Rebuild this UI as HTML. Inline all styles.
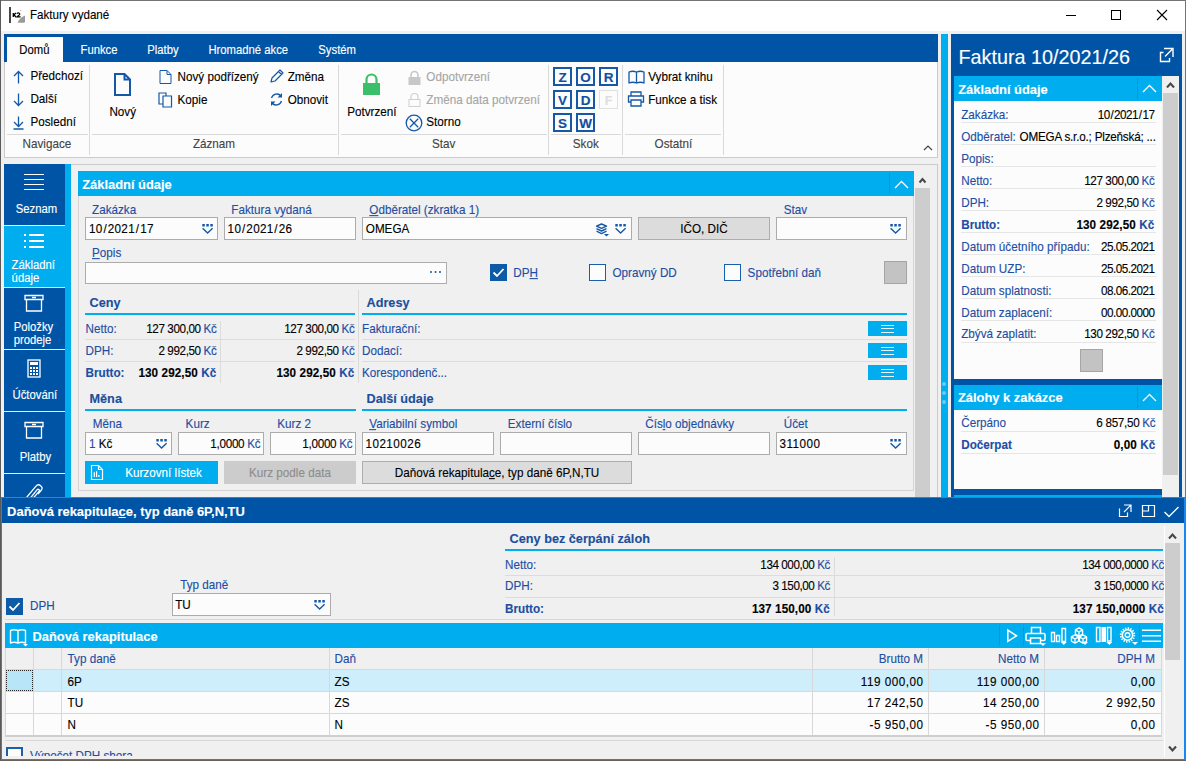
<!DOCTYPE html><html><head><meta charset="utf-8"><style>html,body{margin:0;padding:0;}body{width:1186px;height:761px;position:relative;overflow:hidden;background:#f0f0f0;font-family:"Liberation Sans",sans-serif;}.a{position:absolute;}.t{position:absolute;white-space:nowrap;line-height:16px;-webkit-text-stroke:0.12px currentColor;transform:scaleY(1.08);transform-origin:0 12px;}u{text-decoration:underline;text-underline-offset:1px;text-decoration-thickness:1px;}</style></head><body><div class="a" style="left:0px;top:0px;width:1186px;height:761px;background:#f0f0f0;"></div><div class="a" style="left:1px;top:1px;width:1184px;height:30px;background:#ffffff;"></div><div class="a" style="left:0px;top:0px;width:1186px;height:1px;background:#747474;"></div><div class="a" style="left:0px;top:0px;width:1px;height:761px;background:#5a5a5a;"></div><div class="a" style="left:1185px;top:0px;width:1px;height:761px;background:#747474;"></div><svg class="a" style="left:8px;top:6px;" width="18" height="18" viewBox="0 0 18 18"><rect x="1" y="1" width="2" height="16" fill="#474747"/><path d="M9.5 16.5 Q12 11.5 17 9.5 V15.8 Q17 16.8 16 16.8 H10.5 Z" fill="#9a9a9a"/><path d="M5.3 7 V11 M5.6 9 L8 7 M5.9 8.8 L8 11" stroke="#000" stroke-width="1.3" fill="none"/><path d="M8.8 7.6 Q10 6.6 11.3 7.2 Q12.3 8 11.2 9 L9 10.8 H12.6" stroke="#000" stroke-width="1.2" fill="none"/><path d="M12.5 4 L13 5" stroke="#aaa" stroke-width="1"/></svg><div class="t" style="top:7.48px;font-size:11.6px;color:#000;left:30px;">Faktury vydané</div><div class="a" style="left:1066px;top:15px;width:10px;height:1px;background:#000;"></div><div class="a" style="left:1111px;top:10px;width:10px;height:10px;box-shadow:inset 0 0 0 1px #000;"></div><svg class="a" style="left:1156px;top:9px;" width="12" height="12" viewBox="0 0 12 12"><path d="M1 1 L11 11 M11 1 L1 11" stroke="#000" stroke-width="1.1"/></svg><div class="a" style="left:4px;top:34px;width:934px;height:28px;background:#0054a6;"></div><div class="a" style="left:7px;top:37px;width:56px;height:25px;background:#fcfcfc;"></div><div class="t" style="top:42.08px;font-size:11.3px;color:#000;left:19.3px;">Domů</div><div class="t" style="top:42.08px;font-size:11.3px;color:#fff;left:80.5px;">Funkce</div><div class="t" style="top:42.08px;font-size:11.3px;color:#fff;left:147.3px;">Platby</div><div class="t" style="top:42.08px;font-size:11.3px;color:#fff;left:208.4px;">Hromadné akce</div><div class="t" style="top:42.08px;font-size:11.3px;color:#fff;left:318.3px;">Systém</div><div class="a" style="left:4px;top:62px;width:934px;height:96px;background:#cbcbcb;"></div><div class="a" style="left:5px;top:62px;width:932px;height:95px;background:#fcfcfc;"></div><div class="a" style="left:89px;top:65px;width:1px;height:90px;background:#d9d9d9;"></div><div class="a" style="left:338px;top:65px;width:1px;height:90px;background:#d9d9d9;"></div><div class="a" style="left:548px;top:65px;width:1px;height:90px;background:#d9d9d9;"></div><div class="a" style="left:622px;top:65px;width:1px;height:90px;background:#d9d9d9;"></div><div class="a" style="left:723px;top:65px;width:1px;height:90px;background:#d9d9d9;"></div><div class="a" style="left:7px;top:134px;width:81px;height:1px;background:#d9d9d9;"></div><div class="a" style="left:92px;top:134px;width:245px;height:1px;background:#d9d9d9;"></div><div class="a" style="left:341px;top:134px;width:206px;height:1px;background:#d9d9d9;"></div><div class="a" style="left:551px;top:134px;width:70px;height:1px;background:#d9d9d9;"></div><div class="a" style="left:625px;top:134px;width:96px;height:1px;background:#d9d9d9;"></div><div class="t" style="top:136.45px;font-size:11.7px;color:#444;left:22.5px;">Navigace</div><div class="t" style="top:136.45px;font-size:11.7px;color:#444;left:192.9px;">Záznam</div><div class="t" style="top:136.45px;font-size:11.7px;color:#444;left:432px;">Stav</div><div class="t" style="top:136.45px;font-size:11.7px;color:#444;left:572.8px;">Skok</div><div class="t" style="top:136.45px;font-size:11.7px;color:#444;left:654.6px;">Ostatní</div><div class="t" style="top:68.45px;font-size:11.7px;color:#000;left:30.4px;">Předchozí</div><div class="t" style="top:91.35px;font-size:11.7px;color:#000;left:30.4px;">Další</div><div class="t" style="top:114.25px;font-size:11.7px;color:#000;left:30.4px;">Poslední</div><svg class="a" style="left:13px;top:70px;" width="11" height="14" viewBox="0 0 11 14"><path d="M5.5 1.5 V13.5 M1 6 L5.5 1.5 L10 6" stroke="#1558a8" stroke-width="1.3" fill="none"/></svg><svg class="a" style="left:13px;top:93px;" width="11" height="14" viewBox="0 0 11 14"><path d="M5.5 0.5 V12.5 M1 8 L5.5 12.5 L10 8" stroke="#1558a8" stroke-width="1.3" fill="none"/></svg><svg class="a" style="left:13px;top:116px;" width="11" height="14" viewBox="0 0 11 14"><path d="M5.5 0.5 V10.5 M1 6 L5.5 10.5 L10 6 M0.5 13 H10.5" stroke="#1558a8" stroke-width="1.3" fill="none"/></svg><svg class="a" style="left:113px;top:73px;" width="20" height="24" viewBox="0 0 20 24"><path d="M2 1 H11.5 L17 6.5 V22 H2 Z M11.5 1 V6.5 H17" stroke="#1558a8" stroke-width="2" fill="none" stroke-linejoin="miter"/></svg><div class="t" style="top:103.95px;font-size:11.7px;color:#000;left:109.4px;">Nový</div><svg class="a" style="left:159px;top:70px;" width="13" height="15" viewBox="0 0 13 15"><path d="M1 0.5 H8 L12 4.5 V13.5 H1 Z M8 0.5 V4.5 H12" stroke="#1558a8" stroke-width="1" fill="none"/></svg><div class="t" style="top:68.95px;font-size:11.7px;color:#000;left:177.5px;">Nový podřízený</div><svg class="a" style="left:158px;top:92px;" width="15" height="16" viewBox="0 0 15 16"><path d="M1 1 H8 V12 H1 Z" stroke="#1558a8" stroke-width="1.2" fill="none"/><path d="M5 4 H13.5 V15 H5 Z" stroke="#1558a8" stroke-width="1.2" fill="#fcfcfc"/></svg><div class="t" style="top:91.75px;font-size:11.7px;color:#000;left:177.5px;">Kopie</div><svg class="a" style="left:269px;top:69px;" width="15" height="15" viewBox="0 0 15 15"><path d="M2 13 L3 9 L11 1 L14 4 L6 12 Z M9.5 2.5 L12.5 5.5" stroke="#1558a8" stroke-width="1.2" fill="none" stroke-linejoin="round"/></svg><div class="t" style="top:68.95px;font-size:11.7px;color:#000;left:287.7px;">Změna</div><svg class="a" style="left:269px;top:92px;" width="15" height="15" viewBox="0 0 15 15"><path d="M2.5 6 A5.5 5.5 0 0 1 12 4 M12.5 9 A5.5 5.5 0 0 1 3 11" stroke="#1558a8" stroke-width="1.3" fill="none"/><path d="M13 1 V5.5 H8.5 Z M2 14 V9.5 H6.5 Z" fill="#1558a8"/></svg><div class="t" style="top:91.75px;font-size:11.7px;color:#000;left:287.7px;">Obnovit</div><svg class="a" style="left:362px;top:73px;" width="19" height="23" viewBox="0 0 19 23"><path d="M4.5 10 V6.5 A5 5 0 0 1 14.5 6.5 V10" stroke="#3cbf6a" stroke-width="2.2" fill="none"/><rect x="1" y="10" width="17" height="12" fill="#3cbf6a"/></svg><div class="t" style="top:103.95px;font-size:11.7px;color:#000;left:347.2px;">Potvrzení</div><svg class="a" style="left:408px;top:70px;" width="13" height="15" viewBox="0 0 13 15"><path d="M3 7 V5 A3.5 3.5 0 0 1 10 5 V7" stroke="#c8c8c8" stroke-width="1.6" fill="none"/><rect x="0.5" y="7" width="12" height="8" fill="#c8c8c8"/></svg><div class="t" style="top:68.95px;font-size:11.7px;color:#a6a6a6;left:426.3px;">Odpotvrzení</div><svg class="a" style="left:408px;top:92px;" width="13" height="15" viewBox="0 0 13 15"><path d="M3 7 V5 A3.5 3.5 0 0 1 10 5 V7" stroke="#d0d0d0" stroke-width="1.2" fill="none"/><rect x="1" y="7.5" width="11" height="7" stroke="#d0d0d0" stroke-width="1" fill="none"/></svg><div class="t" style="top:91.75px;font-size:11.7px;color:#a6a6a6;left:426.3px;">Změna data potvrzení</div><svg class="a" style="left:405px;top:114px;" width="18" height="18" viewBox="0 0 18 18"><circle cx="9" cy="9" r="7.8" stroke="#1558a8" stroke-width="1.3" fill="none"/><path d="M4.8 4.8 L13.2 13.2 M13.2 4.8 L4.8 13.2" stroke="#1558a8" stroke-width="1.3"/></svg><div class="t" style="top:114.35px;font-size:11.7px;color:#000;left:426.3px;">Storno</div><div class="a" style="left:553px;top:67px;width:15px;height:15px;border:2px solid #1558a8;"></div><div class="t" style="top:69.62px;font-size:13.5px;color:#0f4f9e;font-weight:bold;left:553.0px;width:19px;text-align:center;transform:none;">Z</div><div class="a" style="left:576px;top:67px;width:15px;height:15px;border:2px solid #1558a8;"></div><div class="t" style="top:69.62px;font-size:13.5px;color:#0f4f9e;font-weight:bold;left:576.0px;width:19px;text-align:center;transform:none;">O</div><div class="a" style="left:599px;top:67px;width:15px;height:15px;border:2px solid #1558a8;"></div><div class="t" style="top:69.62px;font-size:13.5px;color:#0f4f9e;font-weight:bold;left:599.0px;width:19px;text-align:center;transform:none;">R</div><div class="a" style="left:553px;top:90px;width:15px;height:15px;border:2px solid #1558a8;"></div><div class="t" style="top:92.62px;font-size:13.5px;color:#0f4f9e;font-weight:bold;left:553.0px;width:19px;text-align:center;transform:none;">V</div><div class="a" style="left:576px;top:90px;width:15px;height:15px;border:2px solid #1558a8;"></div><div class="t" style="top:92.62px;font-size:13.5px;color:#0f4f9e;font-weight:bold;left:576.0px;width:19px;text-align:center;transform:none;">D</div><div class="a" style="left:599px;top:90px;width:19px;height:19px;box-shadow:inset 0 0 0 1px #e0e0e0;"></div><div class="t" style="top:92.67px;font-size:12.5px;color:#dedede;font-weight:bold;left:599.0px;width:19px;text-align:center;transform:none;">F</div><div class="a" style="left:553px;top:113px;width:15px;height:15px;border:2px solid #1558a8;"></div><div class="t" style="top:115.62px;font-size:13.5px;color:#0f4f9e;font-weight:bold;left:553.0px;width:19px;text-align:center;transform:none;">S</div><div class="a" style="left:576px;top:113px;width:15px;height:15px;border:2px solid #1558a8;"></div><div class="t" style="top:115.62px;font-size:13.5px;color:#0f4f9e;font-weight:bold;left:576.0px;width:19px;text-align:center;transform:none;">W</div><svg class="a" style="left:628px;top:70px;" width="17" height="14" viewBox="0 0 17 14"><path d="M1 2 Q4.5 0.5 8.5 2 V13 Q4.5 11.5 1 13 Z M8.5 2 Q12.5 0.5 16 2 V13 Q12.5 11.5 8.5 13 Z" stroke="#1558a8" stroke-width="1.3" fill="none" stroke-linejoin="round"/></svg><div class="t" style="top:68.95px;font-size:11.7px;color:#000;left:648.2px;">Vybrat knihu</div><svg class="a" style="left:627px;top:91px;" width="18" height="16" viewBox="0 0 18 16"><path d="M4 5 V1 H14 V5 M4 11 H1.5 V5 H16.5 V11 H14 M4 9 H14 V15 H4 Z" stroke="#1558a8" stroke-width="1.3" fill="none"/></svg><div class="t" style="top:91.75px;font-size:11.7px;color:#000;left:648.2px;">Funkce a tisk</div><svg class="a" style="left:922px;top:144px;" width="12" height="8" viewBox="0 0 12 8"><path d="M2 6 L6 2 L10 6" stroke="#444" stroke-width="1.2" fill="none"/></svg><div class="a" style="left:71px;top:164px;width:867px;height:1px;background:#cbcbcb;"></div><div class="a" style="left:937px;top:164px;width:1px;height:333px;background:#cbcbcb;"></div><div class="a" style="left:4px;top:164px;width:61px;height:333px;background:#0054a6;"></div><div class="a" style="left:65px;top:164px;width:6px;height:333px;background:#00adef;"></div><div class="a" style="left:4px;top:226px;width:67px;height:61px;background:#00adef;"></div><div class="a" style="left:4px;top:225px;width:61px;height:1px;background:#e8eef6;"></div><div class="a" style="left:4px;top:287px;width:61px;height:1px;background:#e8eef6;"></div><div class="a" style="left:4px;top:349px;width:61px;height:1px;background:#e8eef6;"></div><div class="a" style="left:4px;top:411px;width:61px;height:1px;background:#e8eef6;"></div><div class="a" style="left:4px;top:473px;width:61px;height:1px;background:#e8eef6;"></div><div class="a" style="left:24px;top:174px;width:20px;height:1.3px;background:#fff"></div><div class="a" style="left:24px;top:179px;width:20px;height:1.3px;background:#fff"></div><div class="a" style="left:24px;top:184px;width:20px;height:1.3px;background:#fff"></div><div class="a" style="left:24px;top:189px;width:20px;height:1.3px;background:#fff"></div><div class="t" style="top:200.68px;font-size:11.3px;color:#ffffff;left:15.7px;">Seznam</div><div class="a" style="left:24px;top:234px;width:2px;height:1.6px;background:#fff"></div><div class="a" style="left:29px;top:234px;width:15px;height:1.6px;background:#fff"></div><div class="a" style="left:24px;top:240px;width:2px;height:1.6px;background:#fff"></div><div class="a" style="left:29px;top:240px;width:15px;height:1.6px;background:#fff"></div><div class="a" style="left:24px;top:246px;width:2px;height:1.6px;background:#fff"></div><div class="a" style="left:29px;top:246px;width:15px;height:1.6px;background:#fff"></div><div class="t" style="top:257.08px;font-size:11.3px;color:#ffffff;left:11.6px;">Základní</div><div class="t" style="top:270.28px;font-size:11.3px;color:#ffffff;left:11.6px;">údaje</div><svg class="a" style="left:24px;top:294px;" width="20" height="18" viewBox="0 0 20 18"><path d="M1 1.5 H19 V5.5 H1 Z M2.5 5.5 V17 H17.5 V5.5" stroke="#fff" stroke-width="1.3" fill="none"/><path d="M8 3.5 H12" stroke="#fff" stroke-width="1.5"/></svg><div class="t" style="top:319.08px;font-size:11.3px;color:#ffffff;left:13.7px;">Položky</div><div class="t" style="top:332.28px;font-size:11.3px;color:#ffffff;left:13.7px;">prodeje</div><svg class="a" style="left:27px;top:359px;" width="14" height="19" viewBox="0 0 14 19"><rect x="1" y="1" width="12" height="17" stroke="#fff" stroke-width="1.3" fill="none"/><rect x="3" y="3" width="8" height="3" fill="#fff"/><rect x="3" y="8" width="2" height="2" fill="#fff"/><rect x="3" y="11" width="2" height="2" fill="#fff"/><rect x="3" y="14" width="2" height="2" fill="#fff"/><rect x="6" y="8" width="2" height="2" fill="#fff"/><rect x="6" y="11" width="2" height="2" fill="#fff"/><rect x="6" y="14" width="2" height="2" fill="#fff"/><rect x="9" y="8" width="2" height="2" fill="#fff"/><rect x="9" y="11" width="2" height="2" fill="#fff"/><rect x="9" y="14" width="2" height="2" fill="#fff"/></svg><div class="t" style="top:386.88px;font-size:11.3px;color:#ffffff;left:12.5px;">Účtování</div><svg class="a" style="left:24px;top:421px;" width="20" height="18" viewBox="0 0 20 18"><path d="M1 1.5 H19 V5.5 H1 Z M2.5 5.5 V17 H17.5 V5.5" stroke="#fff" stroke-width="1.3" fill="none"/><path d="M8 3.5 H12" stroke="#fff" stroke-width="1.5"/></svg><div class="t" style="top:448.78px;font-size:11.3px;color:#ffffff;left:19.7px;">Platby</div><svg class="a" style="left:20px;top:478px;" width="26" height="19" viewBox="0 0 26 19"><path d="M6.5 19.5 L16 8.2 A3.3 3.3 0 0 1 21.2 12.3 L18 16 M10.8 19.5 L17.2 11.6 A1.3 1.3 0 0 1 19.2 13.2 L13.8 19.5" stroke="#fff" stroke-width="1.3" fill="none"/></svg><div class="a" style="left:78px;top:171px;width:836px;height:320px;background:#d4d4d4;"></div><div class="a" style="left:79px;top:196px;width:834px;height:294px;background:#f0f0f0;"></div><div class="a" style="left:78px;top:171px;width:836px;height:25px;background:#00adef;"></div><div class="t" style="top:176.63px;font-size:12.9px;color:#ffffff;font-weight:bold;left:82.2px;transform:none;">Základní údaje</div><div class="a" style="left:889px;top:173px;width:1px;height:21px;background:#0a97cf;"></div><svg class="a" style="left:893px;top:178px;" width="17" height="12" viewBox="0 0 17 12"><path d="M2 10 L8.5 3.5 L15 10" stroke="#fff" stroke-width="1.3" fill="none"/></svg><div class="a" style="left:915px;top:171px;width:15px;height:326px;background:#f0f0f0;"></div><div class="a" style="left:915px;top:188px;width:15px;height:309px;background:#cdcdcd;"></div><svg class="a" style="left:917px;top:175px;" width="11" height="9" viewBox="0 0 11 9"><path d="M2.5 7.5 L5.5 4 L8.5 7.5" stroke="#474747" stroke-width="2" fill="none"/></svg><div class="t" style="top:201.65px;font-size:11.7px;color:#1d4ea3;left:92px;">Zakázka</div><div class="a" style="left:85px;top:217px;width:133px;height:23px;background:#acacac;"></div><div class="a" style="left:86px;top:218px;width:131px;height:21px;background:#fcfcfc;"></div><div class="t" style="top:221.25px;font-size:11.7px;color:#000;letter-spacing:0.3px;left:89px;">10<span style="margin:0 0.8px">/</span>2021<span style="margin:0 0.8px">/</span>17</div><svg class="a" style="left:201px;top:224px;" width="13" height="10" viewBox="0 0 13 10"><rect x="1.3" y="0" width="2.5" height="2.5" fill="#1558a8"/><rect x="5.3" y="0" width="2.5" height="2.5" fill="#1558a8"/><rect x="9.3" y="0" width="2.5" height="2.5" fill="#1558a8"/><path d="M1.6 4.2 L6.6 9 L11.6 4.2" stroke="#1558a8" stroke-width="1.4" fill="none"/></svg><div class="t" style="top:201.65px;font-size:11.7px;color:#1d4ea3;left:231.3px;">Faktura vydaná</div><div class="a" style="left:224px;top:217px;width:132px;height:23px;background:#acacac;"></div><div class="a" style="left:225px;top:218px;width:130px;height:21px;background:#fcfcfc;"></div><div class="t" style="top:221.25px;font-size:11.7px;color:#000;letter-spacing:0.3px;left:227.6px;">10<span style="margin:0 0.8px">/</span>2021<span style="margin:0 0.8px">/</span>26</div><div class="t" style="top:201.65px;font-size:11.7px;color:#1d4ea3;left:369.3px;"><u>O</u>dběratel (zkratka 1)</div><div class="a" style="left:362px;top:217px;width:270px;height:23px;background:#acacac;"></div><div class="a" style="left:363px;top:218px;width:268px;height:21px;background:#fcfcfc;"></div><div class="t" style="top:221.25px;font-size:11.7px;color:#000;left:365.8px;">OMEGA</div><svg class="a" style="left:614px;top:224px;" width="13" height="10" viewBox="0 0 13 10"><rect x="1.3" y="0" width="2.5" height="2.5" fill="#1558a8"/><rect x="5.3" y="0" width="2.5" height="2.5" fill="#1558a8"/><rect x="9.3" y="0" width="2.5" height="2.5" fill="#1558a8"/><path d="M1.6 4.2 L6.6 9 L11.6 4.2" stroke="#1558a8" stroke-width="1.4" fill="none"/></svg><svg class="a" style="left:595px;top:223px;" width="15" height="15" viewBox="0 0 15 15"><path d="M1.5 3.2 L6.5 1 L11.5 3.2 L6.5 5.4 Z M1.5 5.6 L6.5 8 L11.5 5.6 M1.5 8.2 L6.5 10.6 L11.5 8.2" stroke="#1558a8" stroke-width="1.4" fill="none" stroke-linejoin="round"/><path d="M9 11 H14 L11.5 13.5 Z" fill="#1558a8"/></svg><div class="a" style="left:638px;top:217px;width:132px;height:23px;background:#adadad;"></div><div class="a" style="left:639px;top:218px;width:130px;height:21px;background:#dcdcdc;"></div><div class="t" style="top:221.25px;font-size:11.7px;color:#000;left:639.0px;width:130px;text-align:center;">IČO, DIČ</div><div class="t" style="top:201.65px;font-size:11.7px;color:#1d4ea3;left:783.7px;">Stav</div><div class="a" style="left:776px;top:217px;width:131px;height:23px;background:#acacac;"></div><div class="a" style="left:777px;top:218px;width:129px;height:21px;background:#fcfcfc;"></div><svg class="a" style="left:889px;top:224px;" width="13" height="10" viewBox="0 0 13 10"><rect x="1.3" y="0" width="2.5" height="2.5" fill="#1558a8"/><rect x="5.3" y="0" width="2.5" height="2.5" fill="#1558a8"/><rect x="9.3" y="0" width="2.5" height="2.5" fill="#1558a8"/><path d="M1.6 4.2 L6.6 9 L11.6 4.2" stroke="#1558a8" stroke-width="1.4" fill="none"/></svg><div class="t" style="top:245.15px;font-size:11.7px;color:#1d4ea3;left:92px;"><u>P</u>opis</div><div class="a" style="left:85px;top:262px;width:362px;height:22px;background:#acacac;"></div><div class="a" style="left:86px;top:263px;width:360px;height:20px;background:#fcfcfc;"></div><svg class="a" style="left:429px;top:270px;" width="14" height="4" viewBox="0 0 14 4"><circle cx="2" cy="2" r="1" fill="#1558a8"/><circle cx="6.5" cy="2" r="1" fill="#1558a8"/><circle cx="11" cy="2" r="1" fill="#1558a8"/></svg><div class="a" style="left:490px;top:264px;width:17px;height:17px;background:#0d5aa7;"></div><svg class="a" style="left:490px;top:264px;" width="17" height="17" viewBox="0 0 17 17"><path d="M3.5 8.5 L7 12 L13.5 5" stroke="#fff" stroke-width="1.8" fill="none"/></svg><div class="t" style="top:264.95px;font-size:11.7px;color:#1d4ea3;left:513.3px;">DP<u>H</u></div><div class="a" style="left:589px;top:264px;width:17px;height:17px;background:#1a5fab;"></div><div class="a" style="left:590px;top:265px;width:15px;height:15px;background:#fcfcfc;"></div><div class="t" style="top:264.95px;font-size:11.7px;color:#1d4ea3;left:612.5px;">Opravný DD</div><div class="a" style="left:724px;top:264px;width:17px;height:17px;background:#1a5fab;"></div><div class="a" style="left:725px;top:265px;width:15px;height:15px;background:#fcfcfc;"></div><div class="t" style="top:264.95px;font-size:11.7px;color:#1d4ea3;left:747.6px;">Spotřební daň</div><div class="a" style="left:884px;top:261px;width:23px;height:23px;background:#a5a5a5;"></div><div class="a" style="left:885px;top:262px;width:21px;height:21px;background:#c3c3c3;"></div><div class="t" style="top:295.10px;font-size:12.7px;color:#1c4e9c;font-weight:bold;left:89.5px;transform:none;">Ceny</div><div class="a" style="left:85px;top:313px;width:270px;height:2px;background:#00adef;"></div><div class="t" style="top:295.10px;font-size:12.7px;color:#1c4e9c;font-weight:bold;left:366.5px;transform:none;">Adresy</div><div class="a" style="left:362px;top:313px;width:545px;height:2px;background:#00adef;"></div><div class="a" style="left:358px;top:290px;width:1px;height:93px;background:#dadada;"></div><div class="t" style="top:320.65px;font-size:11.7px;color:#1d4ea3;left:85.5px;">Netto:</div><div class="t" style="top:320.65px;font-size:11.7px;color:#000;letter-spacing:-0.4px;left:86.4px;width:130px;text-align:right;">127 300,00 <span style="color:#1d4ea3">Kč</span></div><div class="t" style="top:320.65px;font-size:11.7px;color:#000;letter-spacing:-0.4px;left:224.39999999999998px;width:130px;text-align:right;">127 300,00 <span style="color:#1d4ea3">Kč</span></div><div class="t" style="top:342.65px;font-size:11.7px;color:#1d4ea3;left:85.5px;">DPH:</div><div class="t" style="top:342.65px;font-size:11.7px;color:#000;letter-spacing:-0.4px;left:86.4px;width:130px;text-align:right;">2 992,50 <span style="color:#1d4ea3">Kč</span></div><div class="t" style="top:342.65px;font-size:11.7px;color:#000;letter-spacing:-0.4px;left:224.39999999999998px;width:130px;text-align:right;">2 992,50 <span style="color:#1d4ea3">Kč</span></div><div class="t" style="top:364.65px;font-size:11.7px;color:#1d4ea3;font-weight:bold;left:85.5px;">Brutto:</div><div class="t" style="top:364.65px;font-size:11.7px;color:#000;font-weight:bold;letter-spacing:0.1px;left:86.4px;width:130px;text-align:right;">130 292,50 <span style="color:#1d4ea3">Kč</span></div><div class="t" style="top:364.65px;font-size:11.7px;color:#000;font-weight:bold;letter-spacing:0.1px;left:224.39999999999998px;width:130px;text-align:right;">130 292,50 <span style="color:#1d4ea3">Kč</span></div><div class="a" style="left:85px;top:339px;width:270px;height:1px;background:#dcdcdc;"></div><div class="a" style="left:362px;top:339px;width:545px;height:1px;background:#dcdcdc;"></div><div class="a" style="left:85px;top:361px;width:270px;height:1px;background:#dcdcdc;"></div><div class="a" style="left:362px;top:361px;width:545px;height:1px;background:#dcdcdc;"></div><div class="a" style="left:220px;top:321px;width:1px;height:62px;background:#dcdcdc;"></div><div class="t" style="top:320.65px;font-size:11.7px;color:#1d4ea3;left:362px;">Fakturační:</div><div class="t" style="top:342.65px;font-size:11.7px;color:#1d4ea3;left:362px;">Dodací:</div><div class="t" style="top:364.65px;font-size:11.7px;color:#1d4ea3;left:362px;">Korespondenč...</div><div class="a" style="left:868px;top:321px;width:39px;height:15px;background:#00adef;"></div><div class="a" style="left:881px;top:324.5px;width:13px;height:1.3px;background:#e6f7fd"></div><div class="a" style="left:881px;top:328.0px;width:13px;height:1.3px;background:#e6f7fd"></div><div class="a" style="left:881px;top:331.5px;width:13px;height:1.3px;background:#e6f7fd"></div><div class="a" style="left:868px;top:343px;width:39px;height:15px;background:#00adef;"></div><div class="a" style="left:881px;top:346.5px;width:13px;height:1.3px;background:#e6f7fd"></div><div class="a" style="left:881px;top:350.0px;width:13px;height:1.3px;background:#e6f7fd"></div><div class="a" style="left:881px;top:353.5px;width:13px;height:1.3px;background:#e6f7fd"></div><div class="a" style="left:868px;top:365px;width:39px;height:15px;background:#00adef;"></div><div class="a" style="left:881px;top:368.5px;width:13px;height:1.3px;background:#e6f7fd"></div><div class="a" style="left:881px;top:372.0px;width:13px;height:1.3px;background:#e6f7fd"></div><div class="a" style="left:881px;top:375.5px;width:13px;height:1.3px;background:#e6f7fd"></div><div class="t" style="top:390.60px;font-size:12.7px;color:#1c4e9c;font-weight:bold;left:89.5px;transform:none;">Měna</div><div class="a" style="left:85px;top:408.5px;width:271px;height:2.0px;background:#00adef;"></div><div class="t" style="top:390.60px;font-size:12.7px;color:#1c4e9c;font-weight:bold;left:366.5px;transform:none;">Další údaje</div><div class="a" style="left:362px;top:408.5px;width:545px;height:2.0px;background:#00adef;"></div><div class="t" style="top:416.35px;font-size:11.7px;color:#1d4ea3;left:92.7px;">Měna</div><div class="a" style="left:85px;top:432px;width:87px;height:23px;background:#acacac;"></div><div class="a" style="left:86px;top:433px;width:85px;height:21px;background:#fcfcfc;"></div><div class="t" style="top:435.95px;font-size:11.7px;color:#000;left:89px;"><span style="color:#1d4ea3">1</span> Kč</div><svg class="a" style="left:155px;top:439px;" width="13" height="10" viewBox="0 0 13 10"><rect x="1.3" y="0" width="2.5" height="2.5" fill="#1558a8"/><rect x="5.3" y="0" width="2.5" height="2.5" fill="#1558a8"/><rect x="9.3" y="0" width="2.5" height="2.5" fill="#1558a8"/><path d="M1.6 4.2 L6.6 9 L11.6 4.2" stroke="#1558a8" stroke-width="1.4" fill="none"/></svg><div class="t" style="top:416.35px;font-size:11.7px;color:#1d4ea3;left:185.6px;">Kurz</div><div class="a" style="left:178px;top:432px;width:86px;height:23px;background:#acacac;"></div><div class="a" style="left:179px;top:433px;width:84px;height:21px;background:#fcfcfc;"></div><div class="t" style="top:435.95px;font-size:11.7px;color:#000;letter-spacing:-0.3px;left:180.3px;width:80px;text-align:right;">1,0000 <span style="color:#1d4ea3">Kč</span></div><div class="t" style="top:416.35px;font-size:11.7px;color:#1d4ea3;left:277.3px;">Kurz 2</div><div class="a" style="left:270px;top:432px;width:86px;height:23px;background:#acacac;"></div><div class="a" style="left:271px;top:433px;width:84px;height:21px;background:#fcfcfc;"></div><div class="t" style="top:435.95px;font-size:11.7px;color:#000;letter-spacing:-0.3px;left:272.3px;width:80px;text-align:right;">1,0000 <span style="color:#1d4ea3">Kč</span></div><div class="t" style="top:416.35px;font-size:11.7px;color:#1d4ea3;left:369.2px;"><u>V</u>ariabilní symbol</div><div class="a" style="left:362px;top:432px;width:132px;height:23px;background:#acacac;"></div><div class="a" style="left:363px;top:433px;width:130px;height:21px;background:#fcfcfc;"></div><div class="t" style="top:435.95px;font-size:11.7px;color:#000;letter-spacing:0.45px;left:365.5px;">10210026</div><div class="t" style="top:416.35px;font-size:11.7px;color:#1d4ea3;left:507.8px;">Externí číslo</div><div class="a" style="left:500px;top:432px;width:132px;height:23px;background:#acacac;"></div><div class="a" style="left:501px;top:433px;width:130px;height:21px;background:#fcfcfc;"></div><div class="t" style="top:416.35px;font-size:11.7px;color:#1d4ea3;left:645.2px;">Čís<u>l</u>o objednávky</div><div class="a" style="left:638px;top:432px;width:132px;height:23px;background:#acacac;"></div><div class="a" style="left:639px;top:433px;width:130px;height:21px;background:#fcfcfc;"></div><div class="t" style="top:416.35px;font-size:11.7px;color:#1d4ea3;left:783.7px;">Účet</div><div class="a" style="left:776px;top:432px;width:131px;height:23px;background:#acacac;"></div><div class="a" style="left:777px;top:433px;width:129px;height:21px;background:#fcfcfc;"></div><div class="t" style="top:435.95px;font-size:11.7px;color:#000;letter-spacing:0.45px;left:779.5px;">311000</div><svg class="a" style="left:889px;top:439px;" width="13" height="10" viewBox="0 0 13 10"><rect x="1.3" y="0" width="2.5" height="2.5" fill="#1558a8"/><rect x="5.3" y="0" width="2.5" height="2.5" fill="#1558a8"/><rect x="9.3" y="0" width="2.5" height="2.5" fill="#1558a8"/><path d="M1.6 4.2 L6.6 9 L11.6 4.2" stroke="#1558a8" stroke-width="1.4" fill="none"/></svg><div class="a" style="left:85px;top:461px;width:133px;height:23px;background:#00adef;"></div><svg class="a" style="left:89px;top:463px;" width="16" height="19" viewBox="0 0 16 19"><path d="M2.5 2.5 H9.5 L13.5 6.5 V16.5 H2.5 Z M9.5 2.5 V6.5 H13.5" stroke="#fff" stroke-width="1.2" fill="none"/><path d="M5.3 14 V9.3 M7.6 14 V8.2 M9.9 14 V12" stroke="#fff" stroke-width="1.2"/></svg><div class="t" style="top:464.55px;font-size:11.7px;color:#ffffff;left:103.5px;width:120px;text-align:center;">Kurzovní lístek</div><div class="a" style="left:224px;top:461px;width:132px;height:23px;background:#cccccc;"></div><div class="t" style="top:464.55px;font-size:11.7px;color:#8c8c8c;left:225.0px;width:130px;text-align:center;">Kurz podle data</div><div class="a" style="left:362px;top:461px;width:270px;height:23px;background:#adadad;"></div><div class="a" style="left:363px;top:462px;width:268px;height:21px;background:#dcdcdc;"></div><div class="t" style="top:464.55px;font-size:11.7px;color:#000;left:363.0px;width:268px;text-align:center;">Daňová rekapitula<u>c</u>e, typ daně 6P,N,TU</div><div class="a" style="left:941px;top:34px;width:7px;height:463px;background:#00adef;"></div><div class="a" style="left:941.5px;top:382px;width:4px;height:4px;border-radius:50%;background:#6ccbf3"></div><div class="a" style="left:941.5px;top:391px;width:4px;height:4px;border-radius:50%;background:#6ccbf3"></div><div class="a" style="left:941.5px;top:400px;width:4px;height:4px;border-radius:50%;background:#6ccbf3"></div><div class="a" style="left:951px;top:34px;width:231px;height:463px;background:#0054a6;"></div><div class="t" style="top:49.44px;font-size:19.8px;color:#ffffff;left:958.5px;transform:none;">Faktura 10/2021/26</div><svg class="a" style="left:1159px;top:47px;" width="16" height="16" viewBox="0 0 16 16"><path d="M4.5 5.5 H1.5 V14.5 H10.5 V11 M5 1.5 H14 V10 M6 9.5 L13 2.5" stroke="#fff" stroke-width="1.4" fill="none"/></svg><div class="a" style="left:954px;top:76px;width:225px;height:303px;background:#fcfcfc;"></div><div class="a" style="left:954px;top:76px;width:208px;height:25px;background:#00adef;"></div><div class="t" style="top:81.93px;font-size:12.9px;color:#ffffff;font-weight:bold;left:958.2px;transform:none;">Základní údaje</div><div class="a" style="left:1137px;top:78px;width:1px;height:21px;background:#0a97cf;"></div><svg class="a" style="left:1141px;top:83px;" width="17" height="11" viewBox="0 0 17 11"><path d="M2 9 L8.5 2.5 L15 9" stroke="#fff" stroke-width="1.3" fill="none"/></svg><div class="a" style="left:1162px;top:76px;width:17px;height:303px;background:#f0f0f0;"></div><div class="a" style="left:1163px;top:93px;width:15px;height:286px;background:#cdcdcd;"></div><svg class="a" style="left:1165px;top:79px;" width="11" height="9" viewBox="0 0 11 9"><path d="M2 8.5 L5.5 4.5 L9 8.5" stroke="#474747" stroke-width="2.1" fill="none"/></svg><div class="t" style="top:106.55px;font-size:11.7px;color:#1d4ea3;left:961.2px;">Zakázka:</div><div class="t" style="top:106.55px;font-size:11.7px;color:#000;letter-spacing:-0.5px;left:1004.4000000000001px;width:150px;text-align:right;">10<span style="margin:0 0.8px">/</span>2021<span style="margin:0 0.8px">/</span>17</div><div class="a" style="left:961px;top:122px;width:195px;height:1px;background:#e6e6e6;"></div><div class="t" style="top:128.85px;font-size:11.7px;color:#1d4ea3;left:961.2px;">Odběratel:</div><div class="t" style="top:128.85px;font-size:11.7px;color:#000;letter-spacing:-0.2px;left:1019.5px;">OMEGA s.r.o.; Plzeňská; ...</div><div class="a" style="left:961px;top:144px;width:195px;height:1px;background:#e6e6e6;"></div><div class="t" style="top:150.75px;font-size:11.7px;color:#1d4ea3;left:961.2px;">Popis:</div><div class="a" style="left:961px;top:166px;width:195px;height:1px;background:#e6e6e6;"></div><div class="t" style="top:172.75px;font-size:11.7px;color:#1d4ea3;left:961.2px;">Netto:</div><div class="t" style="top:172.75px;font-size:11.7px;color:#000;letter-spacing:-0.4px;left:1004.4000000000001px;width:150px;text-align:right;">127 300,00 <span style="color:#1d4ea3">Kč</span></div><div class="a" style="left:961px;top:188px;width:195px;height:1px;background:#e6e6e6;"></div><div class="t" style="top:194.75px;font-size:11.7px;color:#1d4ea3;left:961.2px;">DPH:</div><div class="t" style="top:194.75px;font-size:11.7px;color:#000;letter-spacing:-0.4px;left:1004.4000000000001px;width:150px;text-align:right;">2 992,50 <span style="color:#1d4ea3">Kč</span></div><div class="a" style="left:961px;top:210px;width:195px;height:1px;background:#e6e6e6;"></div><div class="t" style="top:216.75px;font-size:11.7px;color:#1d4ea3;font-weight:bold;left:961.2px;">Brutto:</div><div class="t" style="top:216.75px;font-size:11.7px;color:#000;font-weight:bold;letter-spacing:0.1px;left:1004.4000000000001px;width:150px;text-align:right;">130 292,50 <span style="color:#1d4ea3">Kč</span></div><div class="a" style="left:961px;top:232px;width:195px;height:1px;background:#e6e6e6;"></div><div class="t" style="top:238.75px;font-size:11.7px;color:#1d4ea3;left:961.2px;">Datum účetního případu:</div><div class="t" style="top:238.75px;font-size:11.7px;color:#000;letter-spacing:-0.5px;left:1004.4000000000001px;width:150px;text-align:right;">25.05.2021</div><div class="a" style="left:961px;top:254px;width:195px;height:1px;background:#e6e6e6;"></div><div class="t" style="top:260.75px;font-size:11.7px;color:#1d4ea3;left:961.2px;">Datum UZP:</div><div class="t" style="top:260.75px;font-size:11.7px;color:#000;letter-spacing:-0.5px;left:1004.4000000000001px;width:150px;text-align:right;">25.05.2021</div><div class="a" style="left:961px;top:276px;width:195px;height:1px;background:#e6e6e6;"></div><div class="t" style="top:282.75px;font-size:11.7px;color:#1d4ea3;left:961.2px;">Datum splatnosti:</div><div class="t" style="top:282.75px;font-size:11.7px;color:#000;letter-spacing:-0.5px;left:1004.4000000000001px;width:150px;text-align:right;">08.06.2021</div><div class="a" style="left:961px;top:298px;width:195px;height:1px;background:#e6e6e6;"></div><div class="t" style="top:304.75px;font-size:11.7px;color:#1d4ea3;left:961.2px;">Datum zaplacení:</div><div class="t" style="top:304.75px;font-size:11.7px;color:#000;letter-spacing:-0.5px;left:1004.4000000000001px;width:150px;text-align:right;">00.00.0000</div><div class="a" style="left:961px;top:320px;width:195px;height:1px;background:#e6e6e6;"></div><div class="t" style="top:326.25px;font-size:11.7px;color:#1d4ea3;left:961.2px;">Zbývá zaplatit:</div><div class="t" style="top:326.25px;font-size:11.7px;color:#000;letter-spacing:-0.4px;left:1004.4000000000001px;width:150px;text-align:right;">130 292,50 <span style="color:#1d4ea3">Kč</span></div><div class="a" style="left:961px;top:342px;width:195px;height:1px;background:#e6e6e6;"></div><div class="a" style="left:1080px;top:349px;width:23px;height:23px;background:#a5a5a5;"></div><div class="a" style="left:1081px;top:350px;width:21px;height:21px;background:#c3c3c3;"></div><div class="a" style="left:954px;top:385px;width:225px;height:104px;background:#fcfcfc;"></div><div class="a" style="left:954px;top:385px;width:208px;height:25px;background:#00adef;"></div><div class="t" style="top:390.13px;font-size:12.9px;color:#ffffff;font-weight:bold;left:958px;transform:none;">Zálohy k zakázce</div><div class="a" style="left:1137px;top:387px;width:1px;height:21px;background:#0a97cf;"></div><svg class="a" style="left:1141px;top:392px;" width="17" height="11" viewBox="0 0 17 11"><path d="M2 9 L8.5 2.5 L15 9" stroke="#fff" stroke-width="1.3" fill="none"/></svg><div class="a" style="left:1162px;top:379px;width:17px;height:118px;background:#f0f0f0;"></div><div class="a" style="left:1163px;top:379px;width:15px;height:96px;background:#cdcdcd;"></div><div class="t" style="top:414.95px;font-size:11.7px;color:#1d4ea3;left:961.2px;">Čerpáno</div><div class="t" style="top:414.95px;font-size:11.7px;color:#000;letter-spacing:-0.3px;left:1005.4000000000001px;width:150px;text-align:right;">6 857,50 <span style="color:#1d4ea3">Kč</span></div><div class="a" style="left:961px;top:431px;width:195px;height:1px;background:#e6e6e6;"></div><div class="t" style="top:437.35px;font-size:11.7px;color:#1d4ea3;font-weight:bold;left:961.2px;">Dočerpat</div><div class="t" style="top:437.35px;font-size:11.7px;color:#000;font-weight:bold;letter-spacing:0.1px;left:1005.4000000000001px;width:150px;text-align:right;">0,00 <span style="color:#1d4ea3">Kč</span></div><div class="a" style="left:961px;top:453px;width:195px;height:1px;background:#e6e6e6;"></div><div class="a" style="left:954px;top:495px;width:208px;height:2px;background:#00adef;"></div><div class="a" style="left:1px;top:497px;width:1184px;height:263px;background:#1a86f0;"></div><div class="a" style="left:0px;top:760px;width:1186px;height:1px;background:#6b6058;"></div><div class="a" style="left:2px;top:498px;width:1182px;height:261px;background:#f0f0f0;"></div><div class="a" style="left:2px;top:498px;width:1182px;height:25px;background:#0054a6;"></div><div class="t" style="top:503.71px;font-size:12.95px;color:#ffffff;font-weight:bold;left:7.1px;transform:none;">Daňová rekapitula<u>c</u>e, typ daně 6P,N,TU</div><div class="a" style="left:1113px;top:500px;width:1px;height:21px;background:#1d4f8a;"></div><svg class="a" style="left:1118px;top:504px;" width="15" height="14" viewBox="0 0 15 14"><path d="M1.5 4.5 V12.5 H9.5 V8.5 M6 1 H13 V8 M12.8 1.2 L6 8" stroke="#fff" stroke-width="1.2" fill="none"/></svg><svg class="a" style="left:1141px;top:504px;" width="15" height="14" viewBox="0 0 15 14"><path d="M1.5 1.5 H13.5 V12.5 H1.5 Z M7.5 1.5 V7 H1.5" stroke="#fff" stroke-width="1.2" fill="none"/></svg><svg class="a" style="left:1163px;top:506px;" width="17" height="12" viewBox="0 0 17 12"><path d="M1.5 6 L6 10.5 L15.5 1" stroke="#fff" stroke-width="1.3" fill="none"/></svg><div class="a" style="left:6px;top:598px;width:17px;height:17px;background:#0d5aa7;"></div><svg class="a" style="left:6px;top:598px;" width="17" height="17" viewBox="0 0 17 17"><path d="M3.5 8.5 L7 12 L13.5 5" stroke="#fff" stroke-width="1.8" fill="none"/></svg><div class="t" style="top:598.35px;font-size:11.7px;color:#1d4ea3;left:30px;">DPH</div><div class="t" style="top:577.15px;font-size:11.7px;color:#1d4ea3;left:180.2px;">Typ daně</div><div class="a" style="left:172px;top:593px;width:159px;height:23px;background:#acacac;"></div><div class="a" style="left:173px;top:594px;width:157px;height:21px;background:#fcfcfc;"></div><div class="t" style="top:596.95px;font-size:11.7px;color:#000;left:175.2px;">TU</div><svg class="a" style="left:313px;top:600px;" width="13" height="10" viewBox="0 0 13 10"><rect x="1.3" y="0" width="2.5" height="2.5" fill="#1558a8"/><rect x="5.3" y="0" width="2.5" height="2.5" fill="#1558a8"/><rect x="9.3" y="0" width="2.5" height="2.5" fill="#1558a8"/><path d="M1.6 4.2 L6.6 9 L11.6 4.2" stroke="#1558a8" stroke-width="1.4" fill="none"/></svg><div class="a" style="left:5px;top:619px;width:1158px;height:1px;background:#d8d8d8;"></div><div class="t" style="top:530.90px;font-size:12.7px;color:#1c4e9c;font-weight:bold;left:509.6px;transform:none;">Ceny bez čerpání záloh</div><div class="a" style="left:505px;top:549px;width:658px;height:2px;background:#00adef;"></div><div class="t" style="top:556.55px;font-size:11.7px;color:#1d4ea3;left:505px;">Netto:</div><div class="t" style="top:556.55px;font-size:11.7px;color:#000;letter-spacing:-0.45px;left:629.9px;width:200px;text-align:right;">134 000,00 <span style="color:#1d4ea3">Kč</span></div><div class="t" style="top:556.55px;font-size:11.7px;color:#000;letter-spacing:-0.45px;left:963.9000000000001px;width:200px;text-align:right;">134 000,0000 <span style="color:#1d4ea3">Kč</span></div><div class="t" style="top:577.75px;font-size:11.7px;color:#1d4ea3;left:505px;">DPH:</div><div class="t" style="top:577.75px;font-size:11.7px;color:#000;letter-spacing:-0.45px;left:629.9px;width:200px;text-align:right;">3 150,00 <span style="color:#1d4ea3">Kč</span></div><div class="t" style="top:577.75px;font-size:11.7px;color:#000;letter-spacing:-0.45px;left:963.9000000000001px;width:200px;text-align:right;">3 150,0000 <span style="color:#1d4ea3">Kč</span></div><div class="t" style="top:600.55px;font-size:11.7px;color:#1d4ea3;font-weight:bold;left:505px;">Brutto:</div><div class="t" style="top:600.55px;font-size:11.7px;color:#000;font-weight:bold;letter-spacing:0.1px;left:629.9px;width:200px;text-align:right;">137 150,00 <span style="color:#1d4ea3">Kč</span></div><div class="t" style="top:600.55px;font-size:11.7px;color:#000;font-weight:bold;letter-spacing:0.1px;left:963.9000000000001px;width:200px;text-align:right;">137 150,0000 <span style="color:#1d4ea3">Kč</span></div><div class="a" style="left:505px;top:575px;width:658px;height:1px;background:#dcdcdc;"></div><div class="a" style="left:505px;top:597px;width:658px;height:1px;background:#dcdcdc;"></div><div class="a" style="left:834px;top:557px;width:1px;height:59px;background:#dcdcdc;"></div><div class="a" style="left:1164px;top:526px;width:1px;height:231px;background:#ffffff;"></div><div class="a" style="left:1165px;top:526px;width:15px;height:232px;background:#f0f0f0;"></div><div class="a" style="left:1165px;top:543px;width:15px;height:117px;background:#cdcdcd;"></div><svg class="a" style="left:1167px;top:530px;" width="11" height="9" viewBox="0 0 11 9"><path d="M2 8.5 L5.5 4.5 L9 8.5" stroke="#474747" stroke-width="2.1" fill="none"/></svg><svg class="a" style="left:1167px;top:744px;" width="11" height="9" viewBox="0 0 11 9"><path d="M2 2.5 L5.5 6.5 L9 2.5" stroke="#474747" stroke-width="2.1" fill="none"/></svg><div class="a" style="left:5px;top:623px;width:1158px;height:25px;background:#00adef;"></div><svg class="a" style="left:9px;top:628px;" width="20" height="19" viewBox="0 0 20 19"><path d="M1.5 2.5 Q5 1 9 2.5 V15 Q5 13.5 1.5 15 Z M9 2.5 Q13 1 16.5 2.5 V15 Q13 13.5 9 15 Z" stroke="#fff" stroke-width="1.4" fill="none" stroke-linejoin="round"/><path d="M14 16 H19 L16.5 18.5 Z" fill="#fff"/></svg><div class="t" style="top:628.55px;font-size:12.85px;color:#ffffff;font-weight:bold;left:32.6px;transform:none;">Daňová rekapitulace</div><div class="a" style="left:999px;top:625px;width:1px;height:21px;background:#0a97cf;"></div><div class="a" style="left:1023px;top:625px;width:1px;height:21px;background:#0a97cf;"></div><div class="a" style="left:1139px;top:625px;width:1px;height:21px;background:#0a97cf;"></div><svg class="a" style="left:995px;top:622px;" width="170" height="26" viewBox="0 0 170 26"><path d="M12.8 8.2 L21.5 13.8 L12.8 19.4 Z" stroke="#fff" stroke-width="1.6" fill="none" stroke-linejoin="miter"/><path d="M36.5 11 V5.5 H45.5 V11" stroke="#fff" stroke-width="1.5" fill="none"/><path d="M35 18.5 H32 Q31 18.5 31 17.5 V12.5 Q31 11.5 32 11.5 H49 Q50 11.5 50 12.5 V17.5 Q50 18.5 49 18.5 H46" stroke="#fff" stroke-width="1.5" fill="none"/><path d="M35.5 16 H45.5 V21.5 H35.5 Z" stroke="#fff" stroke-width="1.5" fill="none"/><path d="M45 21 H51 L48 24 Z" fill="#fff"/><path d="M56.5 10.5 H59.5 V19.5 H56.5 Z M61.5 13.5 H64.5 V19.5 H61.5 Z M67 6.5 H70.5 V19.5 H67 Z" stroke="#fff" stroke-width="1.4" fill="none"/><path d="M65.8 20 H71.8 L68.8 23 Z" fill="#fff"/><path d="M80 12.824 L83.6 14.911999999999999 L83.6 19.088 L80 21.176000000000002 L76.4 19.088 L76.4 14.911999999999999 Z M76.4 14.911999999999999 L80 17 L83.6 14.911999999999999 M80 17 V21.176000000000002" stroke="#fff" stroke-width="1.3" fill="#00adef" stroke-linejoin="round"/><path d="M88 12.824 L91.6 14.911999999999999 L91.6 19.088 L88 21.176000000000002 L84.4 19.088 L84.4 14.911999999999999 Z M84.4 14.911999999999999 L88 17 L91.6 14.911999999999999 M88 17 V21.176000000000002" stroke="#fff" stroke-width="1.3" fill="#00adef" stroke-linejoin="round"/><path d="M84 5.824 L87.6 7.912 L87.6 12.088000000000001 L84 14.176 L80.4 12.088000000000001 L80.4 7.912 Z M80.4 7.912 L84 10 L87.6 7.912 M84 10 V14.176" stroke="#fff" stroke-width="1.3" fill="#00adef" stroke-linejoin="round"/><path d="M87 20 H93 L90 23 Z" fill="#fff"/><path d="M101.5 5.5 H105 V19.5 H101.5 Z M112.5 5.5 H116 V19 H112.5 Z" stroke="#fff" stroke-width="1.4" fill="none"/><rect x="106.5" y="5" width="4.5" height="15" fill="#fff"/><path d="M111.3 20 H117.3 L114.3 23 Z" fill="#fff"/><circle cx="132.5" cy="13" r="5.2" stroke="#fff" stroke-width="1.6" fill="none" /><circle cx="132.5" cy="13" r="6.8" stroke="#fff" stroke-width="1.8" fill="none" stroke-dasharray="1.4 1.27"/><circle cx="132.5" cy="13" r="2.3" stroke="#fff" stroke-width="1.4" fill="none"/><path d="M137 20 H143 L140 23 Z" fill="#fff"/><path d="M147 8.2 H166 M147 13.7 H166 M147 19.2 H166" stroke="#fff" stroke-width="1.5"/></svg><div class="a" style="left:5px;top:648px;width:1157px;height:89px;background:#d5d5d5;"></div><div class="a" style="left:6px;top:648px;width:1155px;height:22px;background:#f0f0f0;"></div><div class="a" style="left:6px;top:670px;width:1155px;height:22px;background:#cdeefa;"></div><div class="a" style="left:6px;top:692px;width:1155px;height:22px;background:#fcfcfc;"></div><div class="a" style="left:6px;top:714px;width:1155px;height:21px;background:#fcfcfc;"></div><div class="a" style="left:6px;top:669px;width:1155px;height:1px;background:#d8d8d8;"></div><div class="a" style="left:6px;top:691px;width:1155px;height:1px;background:#d8d8d8;"></div><div class="a" style="left:6px;top:713px;width:1155px;height:1px;background:#d8d8d8;"></div><div class="a" style="left:5px;top:735px;width:1157px;height:2px;background:#cfcfcf;"></div><div class="a" style="left:33px;top:648px;width:1px;height:87px;background:#d8d8d8;"></div><div class="a" style="left:61px;top:648px;width:1px;height:87px;background:#d8d8d8;"></div><div class="a" style="left:329px;top:648px;width:1px;height:87px;background:#d8d8d8;"></div><div class="a" style="left:812px;top:648px;width:1px;height:87px;background:#d8d8d8;"></div><div class="a" style="left:928px;top:648px;width:1px;height:87px;background:#d8d8d8;"></div><div class="a" style="left:1044px;top:648px;width:1px;height:87px;background:#d8d8d8;"></div><div class="a" style="left:1161px;top:648px;width:1px;height:89px;background:#d8d8d8;"></div><div class="a" style="left:6px;top:670px;width:25px;height:19px;border:1px dotted #222;background:#b8e5f8"></div><div class="t" style="top:650.95px;font-size:11.7px;color:#1d4ea3;left:67.6px;">Typ daně</div><div class="t" style="top:650.95px;font-size:11.7px;color:#1d4ea3;left:334.6px;">Daň</div><div class="t" style="top:650.95px;font-size:11.7px;color:#1d4ea3;left:823px;width:100px;text-align:right;">Brutto M</div><div class="t" style="top:650.95px;font-size:11.7px;color:#1d4ea3;left:939px;width:100px;text-align:right;">Netto M</div><div class="t" style="top:650.95px;font-size:11.7px;color:#1d4ea3;left:1055px;width:100px;text-align:right;">DPH M</div><div class="t" style="top:673.55px;font-size:11.7px;color:#000;left:67.6px;">6P</div><div class="t" style="top:673.55px;font-size:11.7px;color:#000;left:334.6px;">ZS</div><div class="t" style="top:673.55px;font-size:11.7px;color:#000;letter-spacing:0.5px;left:823.5px;width:100px;text-align:right;">119 000,00</div><div class="t" style="top:673.55px;font-size:11.7px;color:#000;letter-spacing:0.5px;left:939.5px;width:100px;text-align:right;">119 000,00</div><div class="t" style="top:673.55px;font-size:11.7px;color:#000;letter-spacing:0.5px;left:1055.5px;width:100px;text-align:right;">0,00</div><div class="t" style="top:695.25px;font-size:11.7px;color:#000;left:67.6px;">TU</div><div class="t" style="top:695.25px;font-size:11.7px;color:#000;left:334.6px;">ZS</div><div class="t" style="top:695.25px;font-size:11.7px;color:#000;letter-spacing:0.5px;left:823.5px;width:100px;text-align:right;">17 242,50</div><div class="t" style="top:695.25px;font-size:11.7px;color:#000;letter-spacing:0.5px;left:939.5px;width:100px;text-align:right;">14 250,00</div><div class="t" style="top:695.25px;font-size:11.7px;color:#000;letter-spacing:0.5px;left:1055.5px;width:100px;text-align:right;">2 992,50</div><div class="t" style="top:717.15px;font-size:11.7px;color:#000;left:67.6px;">N</div><div class="t" style="top:717.15px;font-size:11.7px;color:#000;left:334.6px;">N</div><div class="t" style="top:717.15px;font-size:11.7px;color:#000;letter-spacing:0.5px;left:823.5px;width:100px;text-align:right;">-5 950,00</div><div class="t" style="top:717.15px;font-size:11.7px;color:#000;letter-spacing:0.5px;left:939.5px;width:100px;text-align:right;">-5 950,00</div><div class="t" style="top:717.15px;font-size:11.7px;color:#000;letter-spacing:0.5px;left:1055.5px;width:100px;text-align:right;">0,00</div><div class="a" style="left:5px;top:740px;width:1158px;height:1px;background:#d8d8d8;"></div><div class="a" style="left:0;top:745px;width:1183px;height:11px;overflow:hidden"><div class="a" style="left:6px;top:2px;width:13px;height:13px;border:2px solid #1a5fab;background:#fcfcfc"></div><div class="t" style="left:30px;top:3px;font-size:11.7px;color:#1d4ea3">Výpočet DPH shora</div></div></body></html>
